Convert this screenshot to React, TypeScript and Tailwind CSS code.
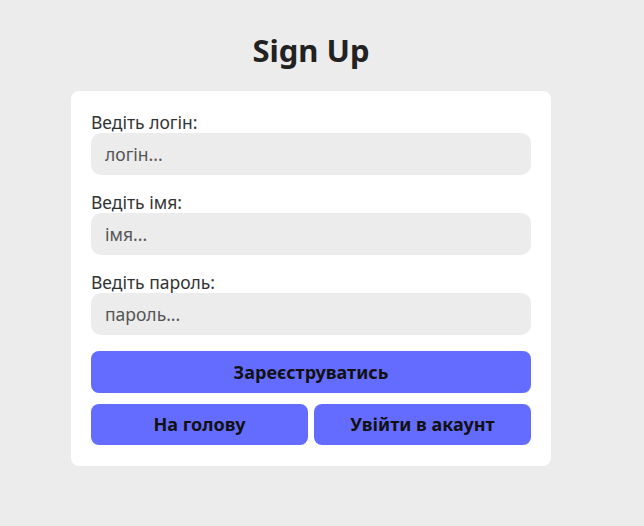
export default function App() {
  const groups = [
    { label: "Ведіть логін:", ph: "логін..." },
    { label: "Ведіть імя:", ph: "імя..." },
    { label: "Ведіть пароль:", ph: "пароль..." },
  ];
  return (
    <div
      className="min-h-[526px] w-full bg-[#ececec] flex flex-col items-center pt-[30px] pr-[22px]"
      style={{ fontFamily: '"Noto Sans", "Open Sans", sans-serif' }}
    >
      <h1 className="text-[31px] leading-[40px] font-bold text-[#222222]">Sign Up</h1>
      <div className="mt-[21px] w-[480px] bg-white rounded-[8px] px-[20px] pt-[20px] pb-[21px] flex flex-col">
        {groups.map((g) => (
          <div key={g.label} className="flex flex-col mb-[16px]">
            <label className="text-[17.5px] leading-[22px] text-[#333333]">{g.label}</label>
            <input
              className="h-[42px] rounded-[10px] bg-[#ececec] px-[14px] text-[17.5px] text-[#333333] placeholder:text-[#555555] outline-none"
              placeholder={g.ph}
            />
          </div>
        ))}
        <button className="h-[42px] rounded-[8px] bg-[#646cff] text-[18px] font-bold text-[#111111]">
          Зареєструватись
        </button>
        <div className="mt-[11px] flex gap-[6px]">
          <button className="flex-1 h-[41px] rounded-[8px] bg-[#646cff] text-[18px] font-bold text-[#111111]">
            На голову
          </button>
          <button className="flex-1 h-[41px] rounded-[8px] bg-[#646cff] text-[18px] font-bold text-[#111111]">
            Увійти в акаунт
          </button>
        </div>
      </div>
    </div>
  );
}
